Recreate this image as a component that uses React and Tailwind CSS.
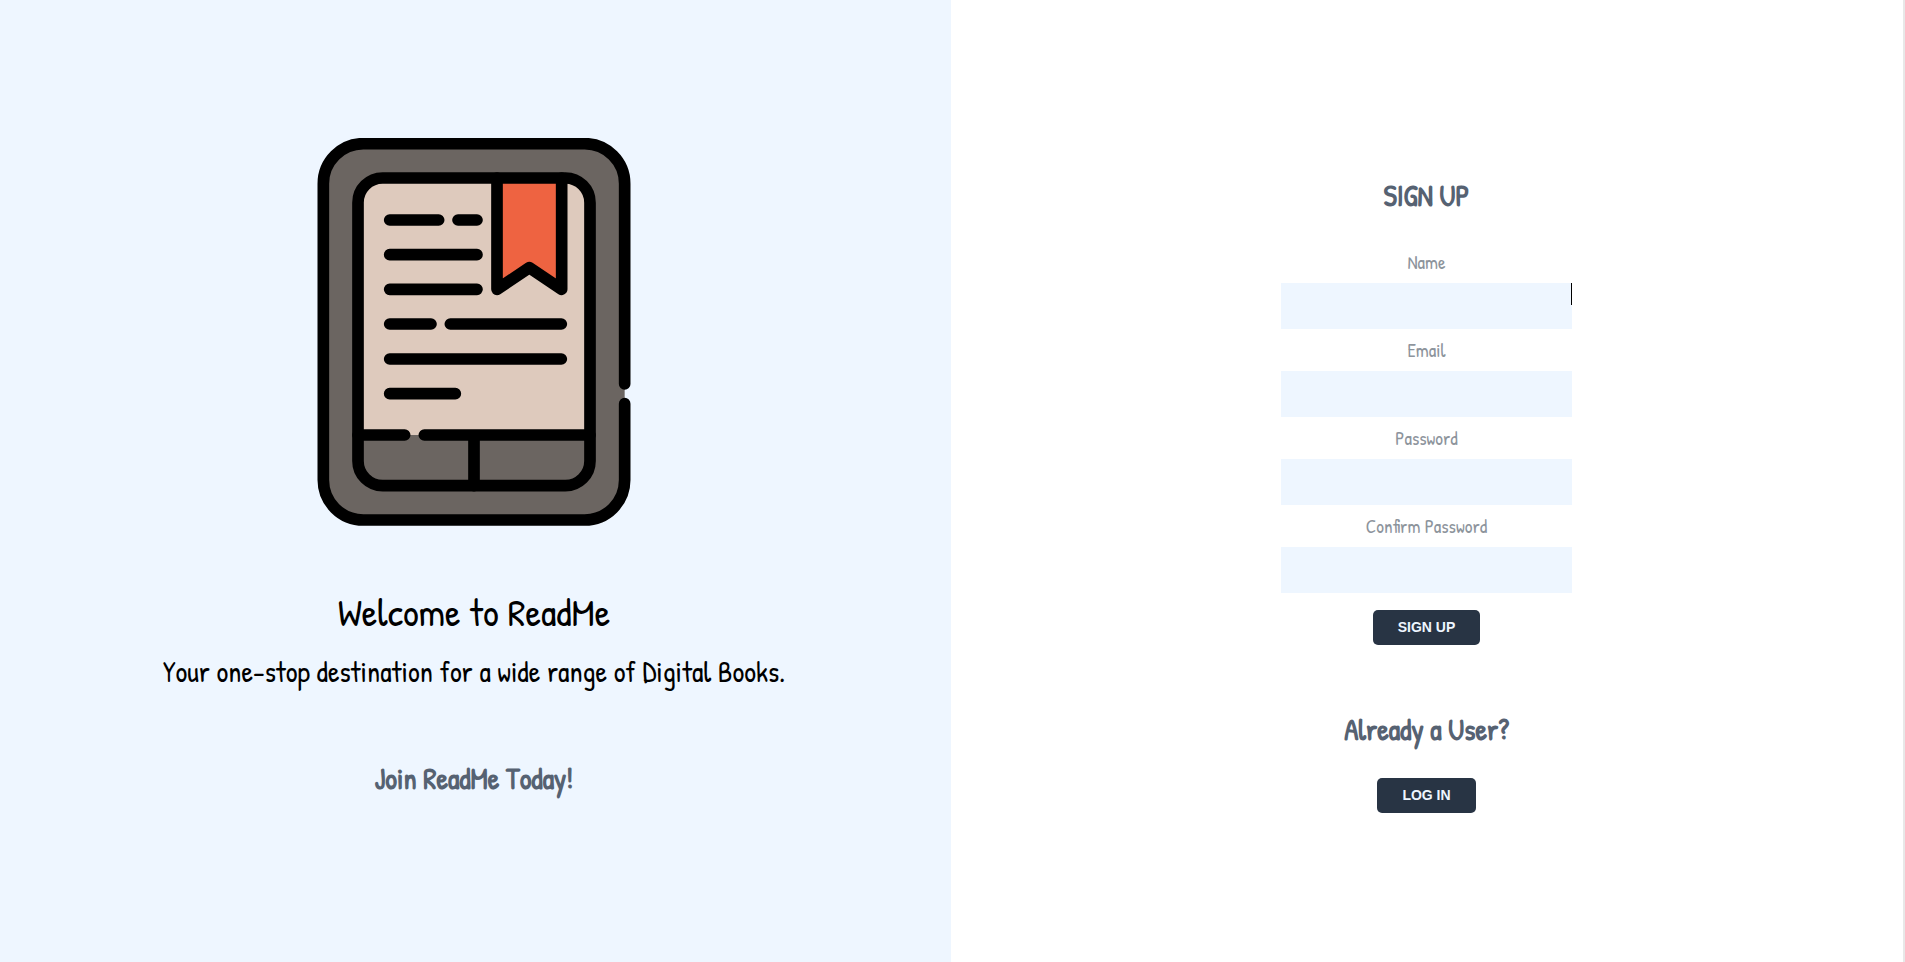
const fields = [
  { id: "name", label: "Name", type: "text" },
  { id: "email", label: "Email", type: "email" },
  { id: "password", label: "Password", type: "password" },
  { id: "confirm", label: "Confirm Password", type: "password" },
];

function ReaderArt() {
  return (
    <svg viewBox="-60 54 1164 1164" className="size-[388px]" role="img" aria-label="E-book reader">
      <rect x="70" y="71" width="904" height="1129" rx="120" fill="#6b6561" />
      <path d="M174 945V248a74 74 0 0 1 74-74H796a74 74 0 0 1 74 74V945Z" fill="#decabd" />
      <path d="M591 174H785V508L688 443L591 508Z" fill="#ee6341" />
      <g fill="none" stroke="#000" strokeWidth="35" strokeLinecap="round" strokeLinejoin="round">
        <path d="M974 792V191A120 120 0 0 0 854 71H190A120 120 0 0 0 70 191V1080A120 120 0 0 0 190 1200H854A120 120 0 0 0 974 1080V851" />
        <rect x="174" y="174" width="696" height="923" rx="74" />
        <path d="M591 174V508L688 443L785 508V174" />
        <path d="M174 945H314M373 945H870M522 945V1097" />
        <path d="M269 300H416M474 300H531M269 404H531M269 508H531M269 612H393M451 612H784M269 717H784M269 821H466" />
      </g>
    </svg>
  );
}

function DarkButton({ children, type }) {
  return (
    <button
      type={type}
      className="rounded-[5px] bg-[#283444] px-[25px] py-2 font-['Liberation_Sans',sans-serif] text-sm leading-[19px] font-bold text-[#eef6ff]"
    >
      {children}
    </button>
  );
}

export default function App() {
  return (
    <div className="grid min-h-screen grid-cols-2 border-r-2 border-[#e8e8e8] bg-white pr-px font-['Patrick_Hand','Liberation_Sans_Narrow','Open_Sans',sans-serif]">
      <section className="flex flex-col items-center bg-[#eef6ff] pt-[138px] pr-[3px] text-center text-black">
        <ReaderArt />
        <h1 className="mt-[62px] text-[39px] leading-[48px]">Welcome to ReadMe</h1>
        <p className="mt-4 text-[29px] leading-[40px]">
          Your one-stop destination for a wide range of Digital Books.
        </p>
        <h2 className="mt-[63px] text-[29px] leading-[48px] font-bold text-[#566272]">Join ReadMe Today!</h2>
      </section>

      <main className="flex flex-col items-center pt-[172px] text-center">
        <h2 className="text-[29px] leading-[48px] font-bold text-[#566272]">SIGN UP</h2>
        <form className="mt-[21px] flex w-[291px] flex-col items-center">
          {fields.map((f, i) => (
            <div key={f.id} className="flex w-full flex-col">
              <label htmlFor={f.id} className="text-[19px] leading-[42px] text-[#8d949c]">
                {f.label}
              </label>
              <div className="relative flex">
                <input id={f.id} type={f.type} className="h-[46px] w-full bg-[#eef6ff] px-2 text-right text-lg outline-none" />
                {i === 0 && <span className="absolute top-0 right-0 h-[22px] w-px bg-black" />}
              </div>
            </div>
          ))}
          <div className="mt-[17px] flex">
            <DarkButton type="submit">SIGN UP</DarkButton>
          </div>
        </form>
        <h2 className="mt-[61px] text-[29px] leading-[48px] font-bold text-[#566272]">Already a User?</h2>
        <div className="mt-6 flex">
          <DarkButton type="button">LOG IN</DarkButton>
        </div>
      </main>
    </div>
  );
}
